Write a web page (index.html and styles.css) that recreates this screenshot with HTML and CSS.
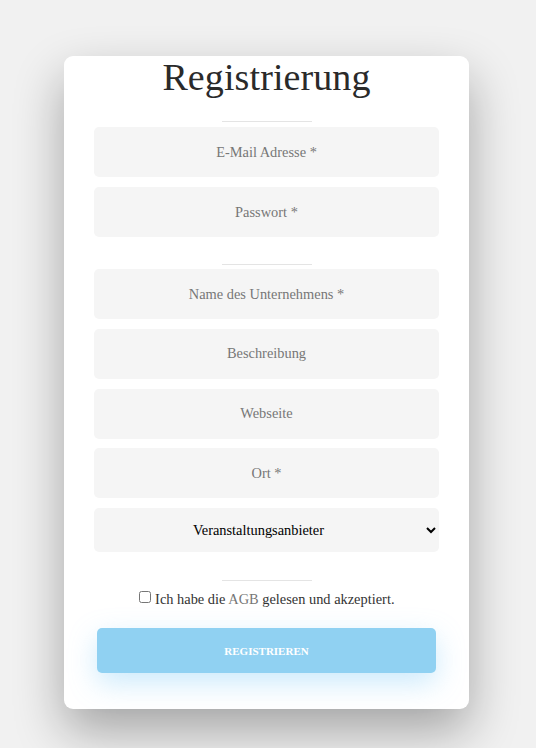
FILE: index.html
```html
<!DOCTYPE html>
<html lang="de">
<head>
<meta charset="utf-8">
<title>Registrierung</title>
<link rel="stylesheet" href="styles.css">
</head>
<body>
<main class="card">
  <h1 class="title">Registrierung</h1>
  <div class="divider d1"></div>
  <div class="fields">
    <input class="field" type="email" placeholder="E-Mail Adresse *">
    <input class="field" type="password" placeholder="Passwort *">
  </div>
  <div class="divider d2"></div>
  <div class="fields tight">
    <input class="field" type="text" placeholder="Name des Unternehmens *">
    <input class="field" type="text" placeholder="Beschreibung">
    <input class="field" type="text" placeholder="Webseite">
    <input class="field" type="text" placeholder="Ort *">
    <select class="select">
      <option>Veranstaltungsanbieter</option>
    </select>
  </div>
  <div class="divider d3"></div>
  <label class="agb"><input type="checkbox" class="check"> Ich habe die <a class="link">AGB</a> gelesen und akzeptiert.</label>
  <button class="submit" type="button">REGISTRIEREN</button>
</main>
</body>
</html>
```
FILE: styles.css
```css
html, body {
  margin: 0;
  padding: 0;
}
body {
  background: #f1f1f1;
  font-family: "Liberation Serif", "Times New Roman", serif;
  color: #333;
  padding-top: 56px;
  padding-bottom: 40px;
}
.card {
  width: 405px;
  box-sizing: border-box;
  margin-left: 64px;
  background: #fff;
  border-radius: 9px;
  padding: 0 30px 36px;
  display: flex;
  flex-direction: column;
  box-shadow: 0 22px 50px rgba(0, 0, 0, 0.32);
}
.title {
  margin: 0 0 23px;
  font-size: 38px;
  line-height: 42px;
  font-weight: normal;
  text-align: center;
  color: #2a2a2a;
  letter-spacing: 0.1px;
}
.divider {
  width: 90px;
  height: 1px;
  background: #e4e4e4;
  margin: 0 auto;
}
.d1 { margin-bottom: 5px; }
.d2 { margin-top: 27px; margin-bottom: 4px; }
.d3 { margin-top: 28px; margin-bottom: 9px; }
.fields {
  display: flex;
  flex-direction: column;
  gap: 10px;
}
.fields.tight {
  gap: 9.75px;
}
.field {
  height: 50px;
  box-sizing: border-box;
  border: none;
  border-radius: 5px;
  background: #f5f5f5;
  text-align: center;
  font-family: "Liberation Serif", "Times New Roman", serif;
  font-size: 14.4px;
  color: #333;
  outline: none;
  padding: 0 10px;
}
.field::placeholder {
  color: #777;
}
.select {
  height: 44px;
  box-sizing: border-box;
  border: none;
  border-radius: 5px;
  background: #f5f5f5;
  font-family: "Liberation Serif", "Times New Roman", serif;
  font-size: 14.4px;
  color: #000;
  text-align: center;
  text-align-last: center;
  padding: 0 8px 0 4px;
  outline: none;
}
.agb {
  display: block;
  text-align: center;
  font-size: 14.4px;
  line-height: 18px;
  color: #333;
}
.check {
  width: 12px;
  height: 12px;
  margin: 0 1px 0 0;
  vertical-align: 1px;
}
.link {
  color: #777;
}
.submit {
  margin: 20px 3px 0;
  height: 45px;
  border: none;
  border-radius: 5px;
  background: #90d1f2;
  color: #fff;
  font-family: "Liberation Serif", "Times New Roman", serif;
  font-weight: bold;
  font-size: 11px;
  box-shadow: 0 10px 28px rgba(110, 195, 245, 0.35);
}
```
